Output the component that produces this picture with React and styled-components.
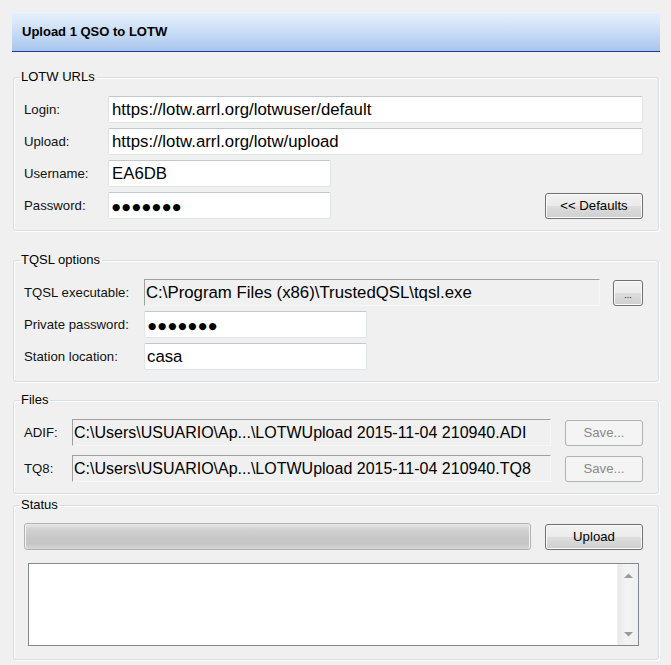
import React from "react";
import styled, { createGlobalStyle } from "styled-components";

const Global = createGlobalStyle`
  html, body { margin: 0; padding: 0; background: #f0f0f0; }
  * { box-sizing: border-box; }
`;

const Window = styled.div`
  width: 671px;
  height: 665px;
  background: #f0f0f0;
  padding: 12px 0 0 12px;
  font-family: "Liberation Sans", Arial, sans-serif;
  font-size: 13px;
  color: #000;
  overflow: hidden;
`;

const Header = styled.div`
  width: 648px;
  height: 40px;
  display: flex;
  align-items: center;
  padding-left: 10px;
  padding-bottom: 1px;
  background: linear-gradient(to bottom, #e6f0fc 0%, #d2e3f8 35%, #bcd4f3 70%, #a7c4ec 100%);
  border-top: 1px solid #eef4fd;
  border-bottom: 1px solid #1f3f8f;
  font-weight: bold;
  font-size: 13px;
  color: #000;
`;

const Group = styled.fieldset`
  margin: ${(p) => p.$top}px 0 0 1px;
  width: 646px;
  padding: ${(p) => p.$pt || 12}px 15px ${(p) => p.$pb || 11}px 10px;
  border: 1px solid #d5dfe5;
  border-radius: 3px;
  box-shadow: inset 1px 1px 0 #fff, 1px 1px 0 #fff;
  display: flex;
  flex-direction: column;
  gap: ${(p) => p.$gap}px;
  min-width: 0;
`;

const Legend = styled.legend`
  font-size: 13px;
  line-height: 14px;
  padding: 0 2px 0 1px;
  margin-left: -4px;
  color: #000;
`;

const Row = styled.div`
  display: flex;
  align-items: ${(p) => p.$align || "center"};
  height: 27px;
`;

const Label = styled.div`
  width: ${(p) => p.$w}px;
  flex: none;
  font-size: 13.2px;
  line-height: 15px;
  color: #111;
`;

const TextBox = styled.div`
  height: 27px;
  width: ${(p) => (p.$w ? `${p.$w}px` : "auto")};
  flex: ${(p) => (p.$w ? "none" : "1 1 auto")};
  display: flex;
  align-items: center;
  padding: 0 ${(p) => p.$pl ?? 3}px;
  font-size: ${(p) => p.$fs || 16.8}px;
  white-space: nowrap;
  overflow: hidden;
  ${(p) =>
    p.$readonly
      ? `
    background: #f0f0f0;
    border-style: solid;
    border-width: 1px;
    border-color: #a0a0a0 #f7f7f7 #f7f7f7 #a0a0a0;
  `
      : `
    background: #fff;
    border: 1px solid #dfe3ea;
    border-top-color: #c2c6cd;
    border-radius: 2px;
  `}
`;

const Dots = styled.span`
  font-family: "DejaVu Sans", sans-serif;
  font-size: 9.5px;
  letter-spacing: 1.8px;
  padding-top: 1px;
`;

const Button = styled.div`
  width: ${(p) => p.$w}px;
  height: 26px;
  flex: none;
  margin-left: ${(p) => (p.$auto ? "auto" : `${p.$ml || 0}px`)};
  display: flex;
  align-items: ${(p) => (p.$small ? "flex-end" : "center")};
  justify-content: center;
  padding-bottom: ${(p) => (p.$small ? 5 : 1)}px;
  border-radius: 3px;
  font-size: ${(p) => (p.$small ? 9 : 13.2)}px;
  ${(p) =>
    p.$disabled
      ? `
    border: 1px solid #adb2b5;
    background: #f4f4f4;
    color: #8a8a8a;
  `
      : `
    border: 1px solid #707070;
    background: linear-gradient(to bottom, #f2f2f2 0%, #ebebeb 48%, #dddddd 52%, #cfcfcf 100%);
    box-shadow: inset 0 0 0 1px #fcfcfc;
    color: #000;
  `}
`;

const Progress = styled.div`
  width: 507px;
  height: 27px;
  flex: none;
  border: 1px solid #b2b2b2;
  border-radius: 3px;
  background: linear-gradient(to bottom, #e8e8e8 0%, #d2d2d2 20%, #c8c8c8 55%, #c6c6c6 80%, #d6d6d6 100%);
  box-shadow: inset 1px 0 0 #f4f4f4, inset -1px 0 0 #f4f4f4;
`;

const LogBox = styled.div`
  margin: 0 4px 0 4px;
  height: 83px;
  display: flex;
  background: #fff;
  border: 1px solid #828790;
`;

const LogText = styled.div`
  flex: 1;
`;

const ScrollBar = styled.div`
  width: 21px;
  flex: none;
  display: flex;
  flex-direction: column;
  justify-content: space-between;
  align-items: center;
  padding: 9px 0 8px;
  background: linear-gradient(to right, #e9e9e9 0%, #f3f3f3 40%, #f0f0f0 100%);
  border-left: 1px solid #f0f0f0;
`;

const Arrow = ({ down }) => (
  <svg width="9" height="5" viewBox="0 0 9 5">
    <polygon
      points={down ? "0,0 9,0 4.5,4.5" : "0,5 9,5 4.5,0.5"}
      fill="#9a9a9a"
    />
  </svg>
);

export default function App() {
  return (
    <>
      <Global />
      <Window>
        <Header>Upload 1 QSO to LOTW</Header>

        <Group $top={18} $gap={5}>
          <Legend>LOTW URLs</Legend>
          <Row>
            <Label $w={84}>Login:</Label>
            <TextBox>https://lotw.arrl.org/lotwuser/default</TextBox>
          </Row>
          <Row>
            <Label $w={84}>Upload:</Label>
            <TextBox>https://lotw.arrl.org/lotw/upload</TextBox>
          </Row>
          <Row>
            <Label $w={84}>Username:</Label>
            <TextBox $w={223}>EA6DB</TextBox>
          </Row>
          <Row $align="flex-end">
            <Label $w={84} style={{ alignSelf: "center" }}>Password:</Label>
            <TextBox $w={223}>
              <Dots>●●●●●●●</Dots>
            </TextBox>
            <Button $w={98} $auto>
              &lt;&lt; Defaults
            </Button>
          </Row>
        </Group>

        <Group $top={22} $gap={5}>
          <Legend>TQSL options</Legend>
          <Row>
            <Label $w={120}>TQSL executable:</Label>
            <TextBox $w={456} $readonly $pl={1}>
              C:\Program Files (x86)\TrustedQSL\tqsl.exe
            </TextBox>
            <Button $w={30} $ml={13} $small>
              ...
            </Button>
          </Row>
          <Row>
            <Label $w={120}>Private password:</Label>
            <TextBox $w={223}>
              <Dots>●●●●●●●</Dots>
            </TextBox>
          </Row>
          <Row>
            <Label $w={120}>Station location:</Label>
            <TextBox $w={223} $pl={2}>casa</TextBox>
          </Row>
        </Group>

        <Group $top={11} $gap={9}>
          <Legend>Files</Legend>
          <Row>
            <Label $w={48}>ADIF:</Label>
            <TextBox $w={479} $readonly $pl={1} $fs={16}>
              C:\Users\USUARIO\Ap...\LOTWUpload 2015-11-04 210940.ADI
            </TextBox>
            <Button $w={78} $ml={14} $disabled>
              Save...
            </Button>
          </Row>
          <Row>
            <Label $w={48}>TQ8:</Label>
            <TextBox $w={479} $readonly $pl={1} $fs={16}>
              C:\Users\USUARIO\Ap...\LOTWUpload 2015-11-04 210940.TQ8
            </TextBox>
            <Button $w={78} $ml={14} $disabled>
              Save...
            </Button>
          </Row>
        </Group>

        <Group $top={4} $gap={13} $pt={11} $pb={13}>
          <Legend>Status</Legend>
          <Row>
            <Progress />
            <Button $w={98} $ml={14}>
              Upload
            </Button>
          </Row>
          <LogBox>
            <LogText />
            <ScrollBar>
              <Arrow />
              <Arrow down />
            </ScrollBar>
          </LogBox>
        </Group>
      </Window>
    </>
  );
}
